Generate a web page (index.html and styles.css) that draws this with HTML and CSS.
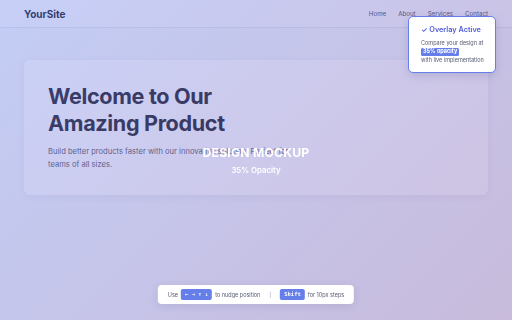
FILE: index.html
```html
<!DOCTYPE html>
<html lang="en">
<head>
<meta charset="utf-8">
<title>YourSite</title>
<link rel="stylesheet" href="styles.css">
</head>
<body>
<header class="site-header">
  <div class="logo">YourSite</div>
  <nav class="nav">
    <a href="#">Home</a>
    <a href="#">About</a>
    <a href="#">Services</a>
    <a href="#">Contact</a>
  </nav>
</header>
<main class="main">
  <section class="hero">
    <h1>Welcome to Our<br>Amazing Product</h1>
    <p>Build better products faster with our innovative solution. Perfect for teams of all sizes.</p>
  </section>
</main>

<div class="overlay"></div>
<div class="overlay-label">
  <div class="label-title">DESIGN MOCKUP</div>
  <div class="label-sub">35% Opacity</div>
</div>

<div class="status">
  <div class="status-title">✓ Overlay Active</div>
  <div class="status-text">Compare your design at</div>
  <div class="status-badge">35% opacity</div>
  <div class="status-text">with live implementation</div>
</div>

<div class="hint">
  <span>Use</span>
  <kbd>← → ↑ ↓</kbd>
  <span>to nudge position</span>
  <span class="sep">|</span>
  <kbd>Shift</kbd>
  <span>for 10px steps</span>
</div>
</body>
</html>
```
FILE: styles.css
```css
* { box-sizing: border-box; margin: 0; padding: 0; }
html, body { width: 512px; height: 320px; overflow: hidden; }
body {
  font-family: Inter, "Noto Sans", sans-serif;
  background: #f5f7fb;
  color: #1f2340;
}
.site-header {
  height: 28px;
  padding: 0 24px;
  display: flex;
  align-items: center;
  justify-content: space-between;
  background: #fafbfe;
  border-bottom: 1px solid #e4e6ee;
}
.logo { font-size: 10px; font-weight: 700; color: #151a30; }
.nav { display: flex; gap: 12px; }
.nav a { font-size: 6.2px; color: #4a4d5e; text-decoration: none; }
.main { padding: 32px 24px 0; }
.hero {
  background: #ffffff;
  border-radius: 6px;
  padding: 23px 24px 24px;
  box-shadow: 0 2px 8px rgba(40, 50, 90, 0.06);
}
.hero h1 {
  font-size: 21.6px;
  line-height: 26.5px;
  font-weight: 700;
  color: #20202a;
  letter-spacing: -0.35px;
}
.hero p {
  margin-top: 9px;
  max-width: 250px;
  font-size: 7.6px;
  line-height: 13px;
  color: #585a68;
}
.overlay {
  position: fixed;
  inset: 0;
  background: linear-gradient(135deg, #667eea 0%, #764ba2 100%);
  opacity: 0.35;
  pointer-events: none;
}
.overlay-label {
  position: fixed;
  inset: 0;
  display: flex;
  flex-direction: column;
  align-items: center;
  justify-content: center;
  gap: 5px;
  color: #ffffff;
  pointer-events: none;
}
.label-title { font-size: 12.2px; font-weight: 700; letter-spacing: 0.2px; }
.label-sub { font-size: 7.8px; font-weight: 600; }
.status {
  position: fixed;
  top: 16px;
  right: 16px;
  width: 88px;
  padding: 8px 6px 7px 12px;
  display: flex;
  flex-direction: column;
  align-items: flex-start;
  background: #ffffff;
  border: 1px solid #667eea;
  border-radius: 5px;
  box-shadow: 0 3px 10px rgba(60, 60, 120, 0.18);
}
.status-title { font-size: 7.3px; font-weight: 600; color: #4f5fd6; line-height: 10px; margin-bottom: 4px; }
.status-text { font-size: 5.5px; color: #555a70; line-height: 9px; }
.status-badge {
  font-size: 5.5px;
  font-weight: 700;
  color: #ffffff;
  background: #667eea;
  border-radius: 1.5px;
  padding: 0 2px;
  line-height: 7.5px;
  margin: 0 0 0.5px;
}
.hint {
  position: fixed;
  bottom: 16px;
  left: 50%;
  transform: translateX(-50%);
  display: flex;
  align-items: center;
  gap: 3px;
  height: 19px;
  padding: 0 10px;
  background: #ffffff;
  border-radius: 4px;
  box-shadow: 0 2px 8px rgba(60, 60, 120, 0.12);
  font-size: 5.5px;
  color: #555a70;
  white-space: nowrap;
}
.hint kbd {
  font-family: "DejaVu Sans Mono", monospace;
  font-size: 5.5px;
  font-weight: 700;
  color: #ffffff;
  background: #667eea;
  border-radius: 2px;
  padding: 2px 4px;
  line-height: 7px;
}
.hint .sep { margin: 0 6px; color: #9a9db0; }
```
